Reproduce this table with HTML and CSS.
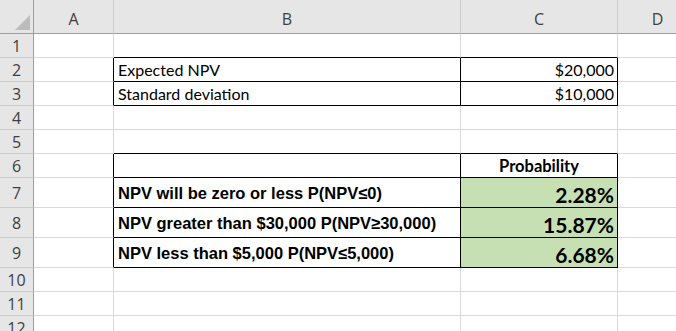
FILE: index.html
```html
<!DOCTYPE html>
<html>
<head>
<meta charset="utf-8">
<link rel="stylesheet" href="styles.css">
</head>
<body>
<div class="sheet">
  <div class="corner"><span class="tri"></span></div>
  <div class="ch">A</div>
  <div class="ch">B</div>
  <div class="ch">C</div>
  <div class="ch last">D</div>

  <div class="rh">1</div>
  <div class="c"></div><div class="c bb"></div><div class="c bb"></div><div class="c"></div>

  <div class="rh">2</div>
  <div class="c br"></div><div class="c br bb txt">Expected NPV</div><div class="c br bb num">$20,000</div><div class="c"></div>

  <div class="rh">3</div>
  <div class="c br"></div><div class="c br bb txt">Standard deviation</div><div class="c br bb num">$10,000</div><div class="c"></div>

  <div class="rh">4</div>
  <div class="c"></div><div class="c"></div><div class="c"></div><div class="c"></div>

  <div class="rh">5</div>
  <div class="c"></div><div class="c bb"></div><div class="c bb"></div><div class="c"></div>

  <div class="rh">6</div>
  <div class="c br"></div><div class="c br bb"></div><div class="c br bb hdr">Probability</div><div class="c"></div>

  <div class="rh">7</div>
  <div class="c br"></div><div class="c br bb lab">NPV will be zero or less P(NPV≤0)</div><div class="c br bb pct">2.28%</div><div class="c"></div>

  <div class="rh">8</div>
  <div class="c br"></div><div class="c br bb lab">NPV greater than $30,000 P(NPV≥30,000)</div><div class="c br bb pct">15.87%</div><div class="c"></div>

  <div class="rh">9</div>
  <div class="c br"></div><div class="c br bb lab">NPV less than $5,000 P(NPV≤5,000)</div><div class="c br bb pct">6.68%</div><div class="c"></div>

  <div class="rh">10</div>
  <div class="c"></div><div class="c"></div><div class="c"></div><div class="c"></div>

  <div class="rh">11</div>
  <div class="c"></div><div class="c"></div><div class="c"></div><div class="c"></div>

  <div class="rh">12</div>
  <div class="c"></div><div class="c"></div><div class="c"></div><div class="c"></div>
</div>
</body>
</html>
```

FILE: styles.css
```css
html, body {
  margin: 0;
  padding: 0;
  background: #ffffff;
  overflow: hidden;
}

.sheet {
  display: grid;
  grid-template-columns: 34px 80px 347px 157px 80px;
  grid-template-rows: 34px 24px 24px 24px 24px 24px 24px 30px 30px 30px 24px 24px 24px;
  width: 698px;
  font-family: "Lato", "Open Sans", sans-serif;
}

.sheet > div {
  box-sizing: border-box;
}

.corner {
  background: #e6e6e6;
  border-right: 1px solid #9e9e9e;
  border-bottom: 1px solid #9e9e9e;
  position: relative;
}

.tri {
  position: absolute;
  right: 3px;
  bottom: 3px;
  width: 0;
  height: 0;
  border-style: solid;
  border-width: 0 0 15px 15px;
  border-color: transparent transparent #bcbcbc transparent;
}

.ch {
  background: #e6e6e6;
  border-bottom: 1px solid #9e9e9e;
  border-right: 1px solid #cbcbcb;
  color: #3f3f3f;
  font-family: "Open Sans", sans-serif;
  font-size: 16px;
  display: flex;
  align-items: center;
  justify-content: center;
  padding-top: 4px;
}

.rh {
  background: #e6e6e6;
  border-right: 1px solid #9e9e9e;
  border-bottom: 1px solid #cbcbcb;
  color: #3f3f3f;
  font-family: "Open Sans", sans-serif;
  font-size: 16px;
  display: flex;
  align-items: center;
  justify-content: center;
  padding-top: 1px;
}

.c {
  border-right: 1px solid #d9d9d9;
  border-bottom: 1px solid #d9d9d9;
  display: flex;
  align-items: flex-end;
  color: #000;
  white-space: nowrap;
  overflow: visible;
}

.c.br { border-right-color: #000; }
.c.bb { border-bottom-color: #000; }

.txt {
  font-size: 16px;
  padding: 0 4px 2px 4px;
}

.num {
  font-size: 16px;
  justify-content: flex-end;
  padding: 0 3px 2px 0;
}

.hdr {
  font-weight: 700;
  font-size: 16.5px;
  justify-content: center;
  padding-bottom: 1px;
}

.lab {
  font-family: "Liberation Sans", Arial, sans-serif;
  font-weight: 700;
  font-size: 16.5px;
  padding: 0 4px 4px 4px;
}

.pct {
  background: #c6e0b4;
  font-weight: 700;
  font-size: 21px;
  justify-content: flex-end;
  padding: 0 3px 0 0;
}
```
